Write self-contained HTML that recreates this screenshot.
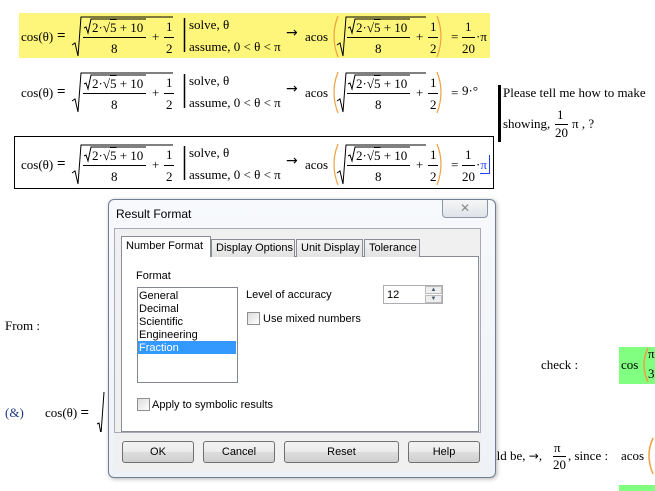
<!DOCTYPE html>
<html><head><meta charset="utf-8"><style>
*{margin:0;padding:0;box-sizing:border-box}
body{width:655px;height:491px;background:#fff;position:relative;overflow:hidden;font-family:"Liberation Serif",serif;font-size:13px;color:#000}
.a{position:absolute;white-space:nowrap;line-height:16px}
.row{position:absolute;left:0;width:500px;height:48px}
.ui{font-family:"Liberation Sans","DejaVu Sans",sans-serif;font-size:11px}
.ar{font-family:"DejaVu Sans",sans-serif;font-size:14px}
.btn{position:absolute;top:441px;height:22px;border:1px solid #707070;border-radius:3px;background:linear-gradient(#f2f2f2,#ebebeb 50%,#dddddd 51%,#cfcfcf);text-align:center;line-height:20px;font-family:"Liberation Sans",sans-serif;font-size:11px}
.tab{position:absolute;top:239px;height:18px;border:1px solid #898c95;border-bottom:none;background:linear-gradient(#f3f3f3,#e3e3e3);font-family:"Liberation Sans",sans-serif;font-size:11px;line-height:16px;padding-left:4px}
.cb{position:absolute;width:13px;height:13px;border:1px solid #8e8f8f;background:linear-gradient(135deg,#dcdcdc,#fff)}
</style></head><body>

<div style="position:absolute;left:19px;top:13px;width:471px;height:45px;background:#fef67b"></div>
<div style="position:absolute;left:14px;top:136px;width:480px;height:53px;border:1px solid #000"></div>

<div class="row" style="top:13px">
<svg width="500" height="48" style="position:absolute;left:0;top:0" fill="none" stroke="#000" stroke-width="1">
<path d="M72,32 L75,30 L78,43 L81,4 L173,4"/><path d="M84,15 L86,14 L88,20 L91,6 L146,6"/>
<line x1="83" y1="24.5" x2="146" y2="24.5"/><line x1="164" y1="24.5" x2="174" y2="24.5"/>
<line x1="184.5" y1="5" x2="184.5" y2="39" stroke-width="1.5"/>
<path d="M337,32 L340,30 L343,43 L346,4 L426,4"/><path d="M348,15 L350,14 L352,20 L355,6 L410,6"/>
<line x1="347" y1="24.5" x2="410" y2="24.5"/><line x1="428" y1="24.5" x2="438" y2="24.5"/>
<path d="M338,3 Q330,23 338,44" stroke="#f0a040" stroke-width="1.2"/><path d="M437,3 Q445,23 437,44" stroke="#f0a040" stroke-width="1.2"/>
<line x1="462" y1="24.5" x2="475" y2="24.5"/>
</svg>
<span class="a" style="left:21px;top:16px">cos(θ)</span><span class="a" style="left:57px;top:15px;font-weight:bold;font-size:15px">=</span>
<span class="a" style="left:92px;top:7px">2·√<span style="text-decoration:overline">5</span> + 10</span><span class="a" style="left:111px;top:28px">8</span>
<span class="a" style="left:152px;top:16px">+</span><span class="a" style="left:166px;top:6px">1</span><span class="a" style="left:166px;top:28px">2</span>
<span class="a" style="left:189px;top:4px">solve, θ</span><span class="a" style="left:189px;top:26px">assume, 0 &lt; θ &lt; π</span>
<span class="a ar" style="left:286px;top:12px">→</span><span class="a" style="left:305px;top:16px">acos</span>
<span class="a" style="left:356px;top:7px">2·√<span style="text-decoration:overline">5</span> + 10</span><span class="a" style="left:375px;top:28px">8</span>
<span class="a" style="left:416px;top:16px">+</span><span class="a" style="left:430px;top:6px">1</span><span class="a" style="left:430px;top:28px">2</span>
<span class="a" style="left:451px;top:16px">=</span>
<span class="a" style="left:465px;top:6px">1</span><span class="a" style="left:462px;top:28px">20</span><span class="a" style="left:476px;top:16px">·π</span>
</div>

<div class="row" style="top:69px">
<svg width="500" height="48" style="position:absolute;left:0;top:0" fill="none" stroke="#000" stroke-width="1">
<path d="M72,32 L75,30 L78,43 L81,4 L173,4"/><path d="M84,15 L86,14 L88,20 L91,6 L146,6"/>
<line x1="83" y1="24.5" x2="146" y2="24.5"/><line x1="164" y1="24.5" x2="174" y2="24.5"/>
<line x1="184.5" y1="5" x2="184.5" y2="39" stroke-width="1.5"/>
<path d="M337,32 L340,30 L343,43 L346,4 L426,4"/><path d="M348,15 L350,14 L352,20 L355,6 L410,6"/>
<line x1="347" y1="24.5" x2="410" y2="24.5"/><line x1="428" y1="24.5" x2="438" y2="24.5"/>
<path d="M338,3 Q330,23 338,44" stroke="#f0a040" stroke-width="1.2"/><path d="M437,3 Q445,23 437,44" stroke="#f0a040" stroke-width="1.2"/>
</svg>
<span class="a" style="left:21px;top:16px">cos(θ)</span><span class="a" style="left:57px;top:15px;font-weight:bold;font-size:15px">=</span>
<span class="a" style="left:92px;top:7px">2·√<span style="text-decoration:overline">5</span> + 10</span><span class="a" style="left:111px;top:28px">8</span>
<span class="a" style="left:152px;top:16px">+</span><span class="a" style="left:166px;top:6px">1</span><span class="a" style="left:166px;top:28px">2</span>
<span class="a" style="left:189px;top:4px">solve, θ</span><span class="a" style="left:189px;top:26px">assume, 0 &lt; θ &lt; π</span>
<span class="a ar" style="left:286px;top:12px">→</span><span class="a" style="left:305px;top:16px">acos</span>
<span class="a" style="left:356px;top:7px">2·√<span style="text-decoration:overline">5</span> + 10</span><span class="a" style="left:375px;top:28px">8</span>
<span class="a" style="left:416px;top:16px">+</span><span class="a" style="left:430px;top:6px">1</span><span class="a" style="left:430px;top:28px">2</span>
<span class="a" style="left:451px;top:16px">=</span><span class="a" style="left:462px;top:14px">9·°</span>
</div>

<div class="row" style="top:141px">
<svg width="500" height="48" style="position:absolute;left:0;top:0" fill="none" stroke="#000" stroke-width="1">
<path d="M72,32 L75,30 L78,43 L81,4 L173,4"/><path d="M84,15 L86,14 L88,20 L91,6 L146,6"/>
<line x1="83" y1="24.5" x2="146" y2="24.5"/><line x1="164" y1="24.5" x2="174" y2="24.5"/>
<line x1="184.5" y1="5" x2="184.5" y2="39" stroke-width="1.5"/>
<path d="M337,32 L340,30 L343,43 L346,4 L426,4"/><path d="M348,15 L350,14 L352,20 L355,6 L410,6"/>
<line x1="347" y1="24.5" x2="410" y2="24.5"/><line x1="428" y1="24.5" x2="438" y2="24.5"/>
<path d="M338,3 Q330,23 338,44" stroke="#f0a040" stroke-width="1.2"/><path d="M437,3 Q445,23 437,44" stroke="#f0a040" stroke-width="1.2"/>
<line x1="462" y1="24.5" x2="475" y2="24.5"/>
<line x1="480" y1="32.5" x2="489" y2="32.5" stroke="#2040ff"/><line x1="489.5" y1="14" x2="489.5" y2="33" stroke="#2040ff"/>
</svg>
<span class="a" style="left:21px;top:16px">cos(θ)</span><span class="a" style="left:57px;top:15px;font-weight:bold;font-size:15px">=</span>
<span class="a" style="left:92px;top:7px">2·√<span style="text-decoration:overline">5</span> + 10</span><span class="a" style="left:111px;top:28px">8</span>
<span class="a" style="left:152px;top:16px">+</span><span class="a" style="left:166px;top:6px">1</span><span class="a" style="left:166px;top:28px">2</span>
<span class="a" style="left:189px;top:4px">solve, θ</span><span class="a" style="left:189px;top:26px">assume, 0 &lt; θ &lt; π</span>
<span class="a ar" style="left:286px;top:12px">→</span><span class="a" style="left:305px;top:16px">acos</span>
<span class="a" style="left:356px;top:7px">2·√<span style="text-decoration:overline">5</span> + 10</span><span class="a" style="left:375px;top:28px">8</span>
<span class="a" style="left:416px;top:16px">+</span><span class="a" style="left:430px;top:6px">1</span><span class="a" style="left:430px;top:28px">2</span>
<span class="a" style="left:451px;top:16px">=</span>
<span class="a" style="left:465px;top:6px">1</span><span class="a" style="left:462px;top:28px">20</span><span class="a" style="left:476px;top:16px">·<span style="color:#2040ff">π</span></span>
</div>

<div style="position:absolute;left:498px;top:85px;width:3px;height:57px;background:#000"></div>
<span class="a" style="left:503px;top:85px">Please tell me how to make</span>
<span class="a" style="left:503px;top:116px">showing,</span>
<span class="a" style="left:557px;top:107px">1</span><div style="position:absolute;left:555px;top:124px;width:13px;height:1px;background:#000"></div><span class="a" style="left:555px;top:125px">20</span>
<span class="a" style="left:572px;top:116px">π , ?</span>

<span class="a" style="left:5px;top:318px">From :</span>
<span class="a" style="left:5px;top:405px;color:#1a3a80">(&amp;)</span>
<span class="a" style="left:45px;top:405px">cos(θ) <b style="font-size:15px">=</b></span>
<svg width="20" height="40" style="position:absolute;left:95px;top:392px" fill="none" stroke="#000"><path d="M2,32 L4,31 L6,42 L9,0"/></svg>
<span class="a" style="left:541px;top:357px">check :</span>
<div style="position:absolute;left:619px;top:347px;width:36px;height:37px;background:#80ff80"></div>
<span class="a" style="left:621px;top:357px">cos</span>
<svg width="20" height="40" style="position:absolute;left:640px;top:346px" fill="none"><path d="M8,2 Q0,19 8,36" stroke="#f0a040" stroke-width="1.5"/></svg>
<span class="a" style="left:648px;top:346px">π</span><span class="a" style="left:648px;top:366px">3</span>
<span class="a" style="left:493px;top:448px">ıld be, <span class="ar" style="font-size:12px">→</span>,</span>
<span class="a" style="left:554px;top:440px">π</span><div style="position:absolute;left:553px;top:456px;width:13px;height:1px;background:#000"></div><span class="a" style="left:553px;top:457px">20</span>
<span class="a" style="left:568px;top:448px">, since :</span>
<span class="a" style="left:621px;top:448px">acos</span>
<svg width="20" height="40" style="position:absolute;left:644px;top:436px" fill="none"><path d="M9,2 Q1,19 9,38" stroke="#f0a040" stroke-width="1.5"/></svg>
<div style="position:absolute;left:619px;top:485px;width:36px;height:6px;background:#80ff80"></div>

<div style="position:absolute;left:108px;top:199px;width:388px;height:279px;border:1px solid #6f7e92;border-radius:6px;background:linear-gradient(#f7f9fc,#eef2f7);box-shadow:1px 1px 4px rgba(0,0,0,.3)"></div>
<span class="a ui" style="left:116px;top:206px;font-size:12px">Result Format</span>
<div style="position:absolute;left:442px;top:200px;width:46px;height:18px;border:1px solid #8a96a6;border-top:none;border-radius:0 0 4px 4px;background:linear-gradient(#f6f6f6,#dfe3e8);text-align:center;line-height:16px;color:#888;font-family:'DejaVu Sans',sans-serif;font-size:12px">✕</div>
<div style="position:absolute;left:114px;top:228px;width:367px;height:205px;border:1px solid #aab;background:#f0f0f0"></div>
<div style="position:absolute;left:114px;top:433px;width:367px;height:38px;background:#f0f0f0"></div>
<div style="position:absolute;left:121px;top:256px;width:358px;height:176px;border:1px solid #898c95;background:#fff"></div>
<div class="tab" style="left:211px;width:84px">Display Options</div>
<div class="tab" style="left:296px;width:67px">Unit Display</div>
<div class="tab" style="left:364px;width:56px">Tolerance</div>
<div class="tab" style="left:121px;top:236px;height:21px;width:90px;background:#fff;line-height:18px">Number Format</div>
<span class="a ui" style="left:136px;top:268px">Format</span>
<div style="position:absolute;left:137px;top:287px;width:101px;height:96px;border:1px solid #828790;background:#fff"></div>
<div style="position:absolute;left:138px;top:341px;width:98px;height:13px;background:#3399ff"></div>
<span class="a ui" style="left:139px;top:290px;line-height:13px">General<br>Decimal<br>Scientific<br>Engineering<br><span style="color:#fff">Fraction</span></span>
<span class="a ui" style="left:246px;top:287px">Level of accuracy</span>
<div style="position:absolute;left:383px;top:285px;width:60px;height:19px;border:1px solid #abadb3;background:#fff"></div>
<span class="a ui" style="left:387px;top:287px">12</span>
<div style="position:absolute;left:425px;top:286px;width:17px;height:8px;border:1px solid #bbb;background:#eee;font-size:6px;line-height:7px;text-align:center;color:#456">▲</div>
<div style="position:absolute;left:425px;top:295px;width:17px;height:8px;border:1px solid #bbb;background:#eee;font-size:6px;line-height:7px;text-align:center;color:#456">▼</div>
<div class="cb" style="left:247px;top:312px"></div><span class="a ui" style="left:263px;top:311px">Use mixed numbers</span>
<div class="cb" style="left:137px;top:398px"></div><span class="a ui" style="left:152px;top:397px">Apply to symbolic results</span>
<div class="btn" style="left:122px;width:72px">OK</div>
<div class="btn" style="left:203px;width:72px">Cancel</div>
<div class="btn" style="left:284px;width:115px">Reset</div>
<div class="btn" style="left:408px;width:72px">Help</div>
</body></html>
